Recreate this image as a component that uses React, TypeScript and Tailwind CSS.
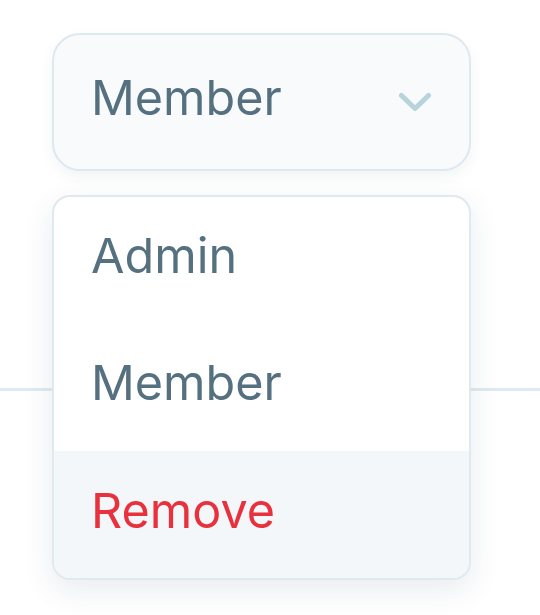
import React from 'react';

const options = ['Admin', 'Member'];

const App: React.FC = () => {
  return (
    <div className="relative w-[540px] h-[615px] overflow-hidden bg-white font-['Inter','Liberation_Sans',sans-serif]">
      {/* Role select */}
      <div className="pt-[33px] pl-[52px]">
        <button className="flex w-[419px] h-[138px] items-center justify-between rounded-[28px] border-2 border-[#dde8ef] bg-[#f8fafc] pl-[37px] pr-[37px] shadow-[0_6px_14px_rgba(30,60,90,0.06)]">
          <span className="text-[48.5px] leading-none text-[#557180] -mt-[8px]">Member</span>
          <svg width="34" height="20" viewBox="0 0 34 20" fill="none" className="-mt-[1px]">
            <path d="M3.5 3.5 L17 16.5 L30.5 3.5" stroke="#b7d3dc" strokeWidth="5" strokeLinecap="round" strokeLinejoin="round" />
          </svg>
        </button>
      </div>

      {/* Row divider behind the menu */}
      <div className="mt-[217px] h-[3px] bg-[#e0eaf0]" />

      {/* Open menu */}
      <div className="absolute left-[52px] top-[195px] w-[419px] rounded-[18px] border-2 border-[#dfe9f0] bg-white overflow-hidden shadow-[0_10px_30px_rgba(30,60,90,0.10)]">
        {options.map((o) => (
          <div key={o} className="flex h-[127px] items-center pl-[37px]">
            <span className="text-[48.5px] leading-none text-[#557180] -mt-[8px]">{o}</span>
          </div>
        ))}
        <div className="flex h-[127px] items-center bg-[#f3f7fa] pl-[37px]">
          <span className="text-[48.5px] leading-none text-[#e8313d] -mt-[6px]">Remove</span>
        </div>
      </div>
    </div>
  );
};

export default App;
